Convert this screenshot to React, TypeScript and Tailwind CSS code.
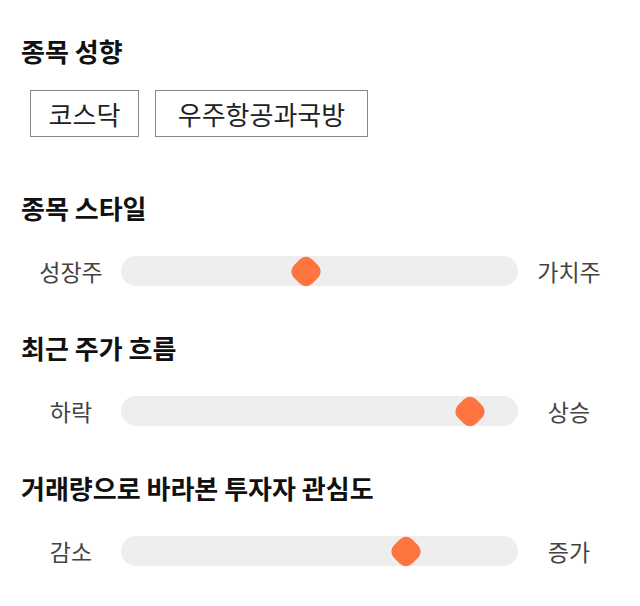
import React from 'react';

const FONT = "font-['Noto_Sans_CJK_KR','Noto_Sans',sans-serif]";

interface SliderRowProps {
  left: string;
  right: string;
  value: number; // 0..1
}

const SliderRow: React.FC<SliderRowProps> = ({ left, right, value }) => {
  return (
    <div className="flex items-center h-[40px]">
      <div className="w-[100px] text-center text-[23px] text-[#444444]">{left}</div>
      <div className="relative flex-1 h-[30px] rounded-full bg-[#eeeeee]">
        <div
          className="absolute top-1/2 w-[29px] h-[29px] -translate-y-1/2 flex items-center justify-center"
          style={{ left: `calc(${value * 100}% - ${value * 29}px)` }}
        >
          <div className="w-[26px] h-[26px] rotate-45 rounded-[9px] bg-[#ff7540]" />
        </div>
      </div>
      <div className="w-[102px] text-center text-[23px] text-[#444444]">{right}</div>
    </div>
  );
};

const Title: React.FC<{ children: React.ReactNode; className?: string }> = ({ children, className }) => (
  <h2 className={`text-[26px] font-bold leading-[33px] text-[#111111] ${className ?? ''}`}>{children}</h2>
);

export default function App() {
  const tags = [
    { label: '코스닥', width: 'w-[109px]' },
    { label: '우주항공과국방', width: 'w-[213px]' },
  ];

  return (
    <div className={`${FONT} bg-white w-[640px] h-[606px] pl-[21px] pr-[20px] pt-[34px]`}>
      <Title>종목 성향</Title>
      <div className="flex gap-4 ml-[9px] mt-[23px]">
        {tags.map((tag) => (
          <div
            key={tag.label}
            className={`${tag.width} border border-[#888888] h-[47px] flex items-center justify-center text-[26px] text-[#222222]`}
          >
            {tag.label}
          </div>
        ))}
      </div>

      <Title className="mt-[54px]">종목 스타일</Title>
      <div className="mt-[27px]">
        <SliderRow left="성장주" right="가치주" value={0.463} />
      </div>

      <Title className="mt-[40px]">최근 주가 흐름</Title>
      <div className="mt-[27px]">
        <SliderRow left="하락" right="상승" value={0.909} />
      </div>

      <Title className="mt-[40px]">거래량으로 바라본 투자자 관심도</Title>
      <div className="mt-[27px]">
        <SliderRow left="감소" right="증가" value={0.735} />
      </div>
    </div>
  );
}
